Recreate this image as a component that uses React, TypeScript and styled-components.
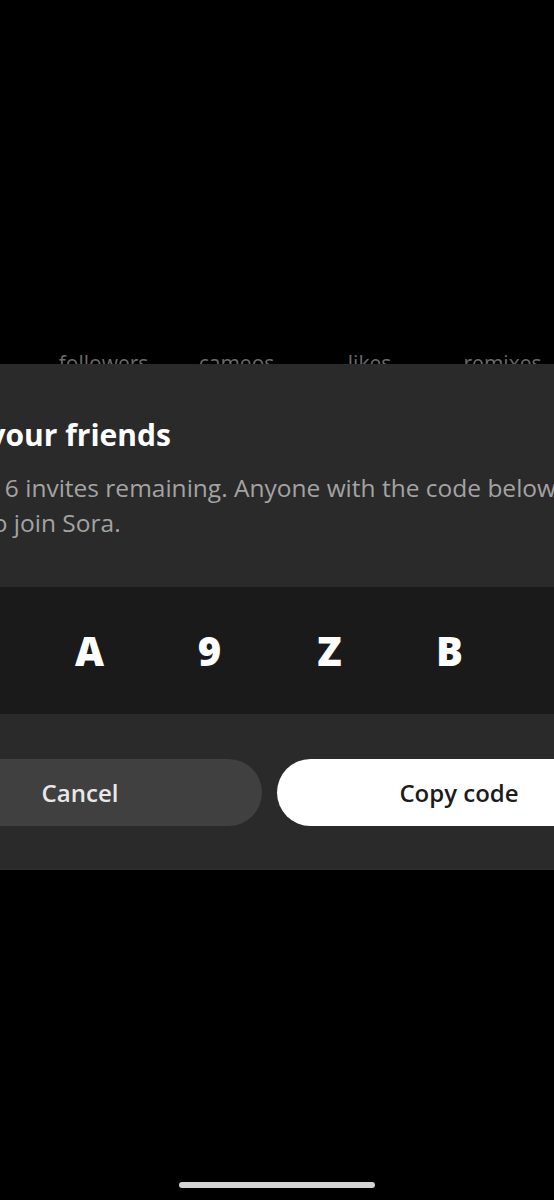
import styled, { createGlobalStyle } from 'styled-components';

const GlobalStyle = createGlobalStyle`
  html, body {
    margin: 0;
    padding: 0;
    background: #000;
    overflow: hidden;
  }
`;

const STATS = ['followers', 'cameos', 'likes', 'remixes'];
const CODE = ['K', 'A', '9', 'Z', 'B', '7'];

const App = () => {
  return (
    <Screen>
      <GlobalStyle />
      <StatsRow>
        {STATS.map((label) => (
          <StatLabel key={label}>{label}</StatLabel>
        ))}
      </StatsRow>

      <Sheet>
        <SheetHeader>
          <SheetTitle>Invite your friends</SheetTitle>
          <SheetText>
            You have 6 invites remaining. Anyone with the code below will
            <br />
            be able to join Sora.
          </SheetText>
        </SheetHeader>

        <CodeBox>
          {CODE.map((char, i) => (
            <CodeChar key={i}>{char}</CodeChar>
          ))}
        </CodeBox>

        <ButtonRow>
          <SheetButton>Cancel</SheetButton>
          <SheetButton $primary>Copy code</SheetButton>
        </ButtonRow>
      </Sheet>

      <HomeIndicator />
    </Screen>
  );
};

export default App;

const Screen = styled.div`
  position: relative;
  width: 554px;
  height: 1200px;
  overflow: hidden;
  background: #000;
  font-family: 'Open Sans', 'Noto Sans', sans-serif;
`;

const StatsRow = styled.div`
  padding-top: 348px;
  padding-left: 37px;

  display: grid;
  grid-template-columns: repeat(4, 133px);
`;

const StatLabel = styled.span`
  text-align: center;

  font-size: 21px;
  line-height: 30px;
  color: #6a6a6a;
`;

const Sheet = styled.section`
  position: absolute;
  top: 364px;
  left: -126px;
  width: 791px;
  height: 506px;

  display: flex;
  flex-direction: column;

  background: #2a2a2a;
`;

const SheetHeader = styled.div`
  height: 223px;
  padding: 50px 24px 0 20px;
  box-sizing: border-box;

  display: flex;
  flex-direction: column;
  row-gap: 14px;
`;

const SheetTitle = styled.h2`
  margin: 0;

  font-size: 30px;
  font-weight: 700;
  line-height: 42px;
  color: #fff;
`;

const SheetText = styled.p`
  margin: 0;

  font-size: 24.5px;
  line-height: 35px;
  color: #a3a3a3;
  white-space: nowrap;
`;

const CodeBox = styled.div`
  height: 127px;
  padding: 0 36px;
  box-sizing: border-box;

  display: flex;
  align-items: center;
  justify-content: center;
  column-gap: 90px;

  background: #1a1a1a;
`;

const CodeChar = styled.span`
  width: 30px;
  text-align: center;

  font-size: 40px;
  font-weight: 800;
  color: #fff;
`;

const ButtonRow = styled.div`
  padding: 45px 24px 0;

  display: flex;
  column-gap: 15px;
`;

const SheetButton = styled.button<{ $primary?: boolean }>`
  flex: 1;
  height: 67px;
  border: none;
  border-radius: 34px;

  font-family: 'Open Sans', 'Noto Sans', sans-serif;
  font-size: 24px;
  font-weight: 600;
  color: ${({ $primary }) => ($primary ? '#1c1c1c' : '#e8e8e8')};
  background: ${({ $primary }) => ($primary ? '#ffffff' : '#404040')};
`;

const HomeIndicator = styled.div`
  position: absolute;
  bottom: 12px;
  left: 179px;
  width: 196px;
  height: 6px;
  border-radius: 3px;

  background: #d4d4d4;
`;
